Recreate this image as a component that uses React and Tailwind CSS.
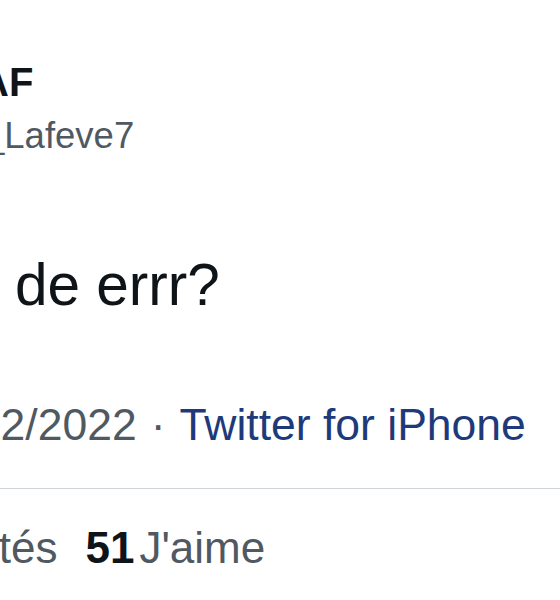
import React from 'react';

export default function App() {
  return (
    <div
      className="w-[560px] h-[600px] bg-white overflow-hidden"
      style={{ fontFamily: '"Liberation Sans", Arial, sans-serif' }}
    >
      <div className="pt-[58px] whitespace-nowrap">
        {/* author */}
        <div className="-ml-[20px] text-[40px] leading-[48px] font-bold text-[#0f1419]">AF</div>
        <div className="mt-[8px] -ml-[16px] text-[36.5px] leading-[44px] text-[#505962]">_Lafeve7</div>

        {/* tweet body */}
        <p className="mt-[92px] pl-[15px] text-[58.5px] leading-[70px] text-[#0f1419]">de errr?</p>

        {/* meta */}
        <div className="mt-[79px] flex text-[44.5px] leading-[52px] text-[#505962]">
          <span className="-ml-[86px]">12/12/2022</span>
          <span className="ml-[14px] mr-[14px]">·</span>
          <span className="text-[#1e3a7b]">Twitter for iPhone</span>
        </div>

        <div className="mt-[37px] h-px bg-[#cfd4d8]" />

        {/* stats */}
        <div className="mt-[33px] flex text-[44px] leading-[52px] text-[#505962]">
          <span className="-ml-[33px]">cités</span>
          <span className="ml-[28px] font-bold text-[#0f1419]">51</span>
          <span className="ml-[5px]">J'aime</span>
        </div>
      </div>
    </div>
  );
}
